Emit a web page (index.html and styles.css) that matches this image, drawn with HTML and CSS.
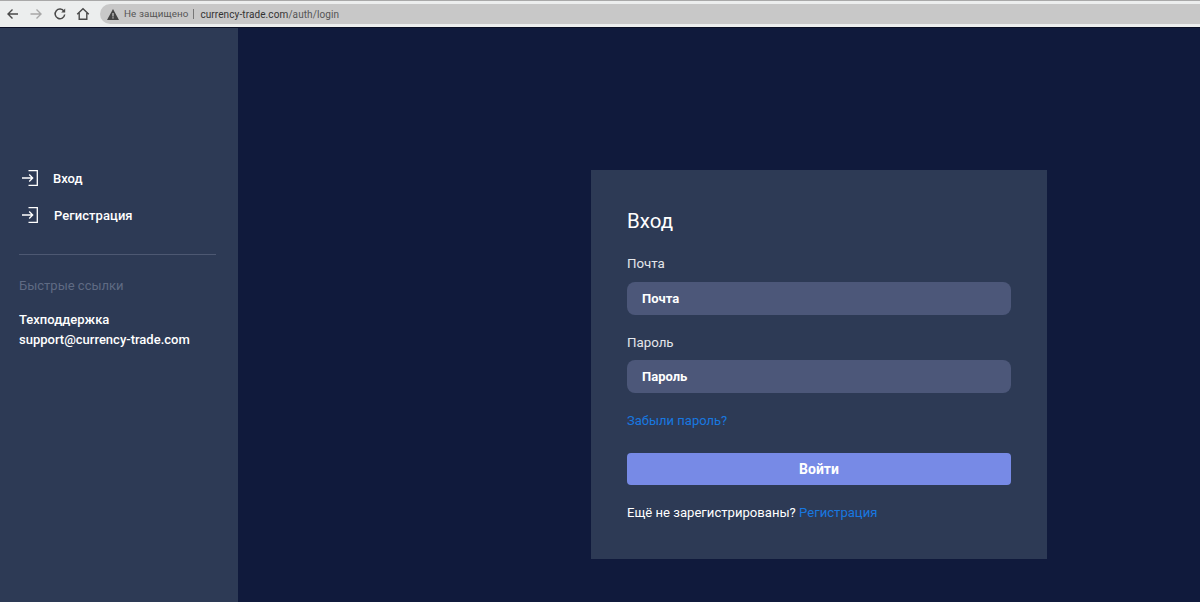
FILE: index.html
```html
<!DOCTYPE html>
<html lang="ru">
<head>
<meta charset="utf-8">
<title>Вход</title>
<link rel="stylesheet" href="styles.css">
</head>
<body>
<header class="toolbar">
  <div class="nav-icons">
    <svg class="nav-icon" viewBox="0 0 14 14"><path d="M12 7H2.500M6.500 2.500 2 7l4.500 4.500" fill="none" stroke="#4a4a4a" stroke-width="1.4"/></svg>
    <svg class="nav-icon" viewBox="0 0 14 14"><path d="M1.500 7H11.500M7.500 2.500 12 7l-4.500 4.500" fill="none" stroke="#a8a8a8" stroke-width="1.4"/></svg>
    <svg class="nav-icon" viewBox="0 0 14 14"><path d="M11 4.300A4.800 4.800 0 1 0 11.700 7.500" fill="none" stroke="#4a4a4a" stroke-width="1.5"/><path d="M12.200 1.600v4H8.200z" fill="#4a4a4a"/></svg>
    <svg class="nav-icon" viewBox="0 0 14 14"><path d="M1.200 7.200 7 1.800l5.800 5.400M3.200 6v6.200h7.600V6" fill="none" stroke="#4a4a4a" stroke-width="1.4"/></svg>
  </div>
  <div class="omnibox">
    <svg class="warn" viewBox="0 0 12 11"><path d="M6 0 12 11H0z" fill="#444"/><path d="M5.400 4h1.200v3.600H5.400zM5.400 8.200h1.200v1.200H5.400z" fill="#ccc"/></svg>
    <span class="insecure">Не защищено</span>
    <span class="url"><span class="host">currency-trade.com</span>/auth/login</span>
  </div>
</header>
<div class="app">
  <aside class="sidebar">
    <nav class="menu">
      <a class="menu-item">
        <svg class="menu-icon" viewBox="0 0 16 16"><path d="M0 8h10.500M7.200 4.500 10.700 8 7.200 11.500M6.500 .7h8.800v14.600H6.500" fill="none" stroke="#fff" stroke-width="1.300"/></svg>
        <span>Вход</span>
      </a>
      <a class="menu-item">
        <svg class="menu-icon" viewBox="0 0 16 16"><path d="M0 8h10.500M7.200 4.500 10.700 8 7.200 11.500M6.500 .7h8.800v14.600H6.500" fill="none" stroke="#fff" stroke-width="1.300"/></svg>
        <span class="menu-label-wide">Регистрация</span>
      </a>
    </nav>
    <hr class="divider">
    <div class="quick-title">Быстрые ссылки</div>
    <div class="support">
      <div class="support-title">Техподдержка</div>
      <div>support@currency-trade.com</div>
    </div>
  </aside>
  <main class="content">
    <form class="card">
      <h1 class="card-title">Вход</h1>
      <label class="field-label">Почта</label>
      <div class="input">Почта</div>
      <label class="field-label second">Пароль</label>
      <div class="input tight">Пароль</div>
      <a class="link forgot">Забыли пароль?</a>
      <div class="submit">Войти</div>
      <p class="signup">Ещё не зарегистрированы? <a class="link">Регистрация</a></p>
    </form>
  </main>
</div>
</body>
</html>
```
FILE: styles.css
```css
* { box-sizing: border-box; }
html, body { margin: 0; height: 100%; overflow: hidden; }
body {
  font-family: Roboto, "Liberation Sans", sans-serif;
  background: #101a3c;
  color: #fff;
  display: flex;
  flex-direction: column;
  width: 1200px;
  height: 602px;
}
.toolbar {
  height: 28px;
  flex: none;
  display: flex;
  align-items: center;
  background: #eceeee;
  border-top: 1px solid #a9a9a9;
  border-bottom: 1px solid #0a0f26;
  padding: 3px 0 3px 6px;
}
.nav-icons { display: flex; gap: 9.3px; width: 94px; flex: none; align-items: center; }
.nav-icon { width: 14px; height: 14px; flex: none; }
.omnibox {
  flex: 1;
  height: 20px;
  background: #c8c8c8;
  border-radius: 10px 0 0 10px;
  display: flex;
  align-items: center;
  padding-left: 7px;
  font-size: 9.8px;
  color: #555;
}
.warn { width: 12px; height: 11px; margin-right: 5px; flex: none; }
.insecure { padding-right: 5px; border-right: 1px solid #777; line-height: 10px; letter-spacing: .1px; }
.url { margin-left: 6px; font-size: 10px; letter-spacing: .1px; }
.host { color: #333; }
.app { flex: 1; display: flex; min-height: 0; }
.sidebar {
  width: 238px;
  flex: none;
  background: #2d3a55;
  padding: 140px 22px 0 19px;
  font-size: 13px;
}
.menu { display: flex; flex-direction: column; gap: 17px; }
.menu-item { display: flex; align-items: center; gap: 15px; height: 20px; font-weight: 500; font-size: 13px; padding-left: 3px; }
.menu-label-wide { margin-left: 1px; letter-spacing: .05px; }
.menu-icon { width: 16px; height: 16px; flex: none; }
.divider { border: 0; border-top: 1px solid #4d5872; margin: 29px 0 0; }
.quick-title { margin-top: 23px; color: #5f6a83; font-size: 13px; line-height: 16px; }
.support { margin-top: 16px; font-size: 13px; line-height: 20px; font-weight: 500; }
.support-title { font-weight: 500; }
.content { flex: 1; padding: 142px 0 0 353px; }
.card {
  width: 456px;
  height: 389px;
  background: #2d3a55;
  padding: 39px 36px 0;
  display: flex;
  flex-direction: column;
  align-items: flex-start;
}
.card-title { margin: 0; font-size: 20.5px; line-height: 24px; font-weight: 400; }
.field-label { margin-top: 23px; font-size: 13.300px; line-height: 16px; color: #e4e6ea; }
.field-label.second { margin-top: 20px; }
.input {
  width: 384px;
  height: 33px;
  margin-top: 10px;
  padding-left: 15px;
  background: #4c5779;
  border-radius: 8px;
  font-size: 13px;
  font-weight: 700;
  line-height: 33px;
}
.input.tight { margin-top: 9px; }
.link { color: #1878e0; }
.forgot { margin-top: 20px; font-size: 13px; line-height: 16px; }
.submit {
  width: 384px;
  height: 32px;
  margin-top: 24px;
  background: #778ae6;
  border-radius: 4px;
  text-align: center;
  font-size: 14px;
  font-weight: 700;
  line-height: 32px;
}
.signup { margin: 20px 0 0; font-size: 13.1px; line-height: 16px; }
```
